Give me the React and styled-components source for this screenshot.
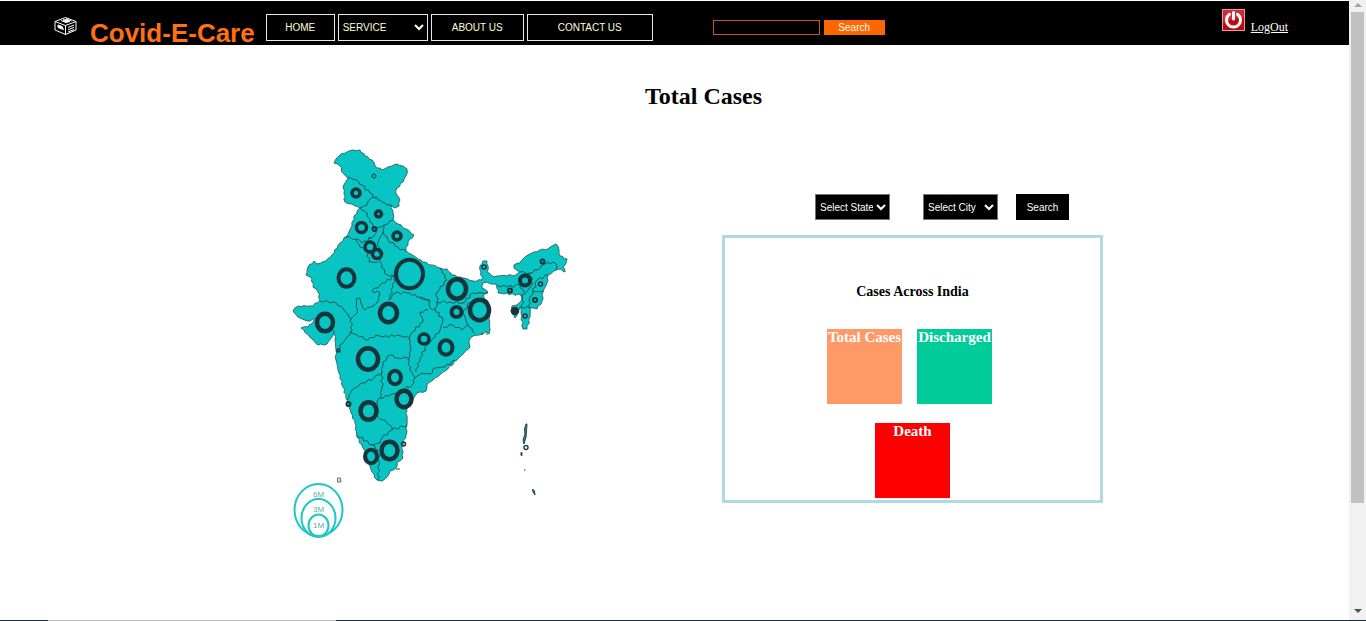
import React from "react";
import styled, { createGlobalStyle } from "styled-components";

const Global = createGlobalStyle`
  * { box-sizing: border-box; }
  body { margin: 0; background: #fff; font-family: "Liberation Serif", "Times New Roman", serif; color: #000; }
  button, select, input { font-family: "Liberation Sans", Arial, sans-serif; font-size: 10px; margin: 0; }
`;

const Shell = styled.div`
  display: flex;
  flex-direction: column;
  min-height: 100vh;
`;
const Page = styled.div`
  display: flex;
  flex: 1;
`;
const BottomEdge = styled.div`
  display: flex;
  height: 1px;
  padding-left: 48px;
  background: #1b2b3c;
  &::before { content: ""; width: 288px; background: #bfbfbf; }
`;
const Content = styled.div`
  flex: 1;
  min-width: 0;
  padding-top: 1px;
`;
const Header = styled.header`
  display: flex;
  align-items: flex-start;
  height: 44px;
  padding: 0 61px 0 54px;
  background: #000;
`;
const LogoBox = styled.svg`
  flex: none;
  width: 23px;
  height: 20px;
  margin: 15px 13px 0 0;
`;
const Brand = styled.h1`
  flex: none;
  margin: 20px 11px 0 0;
  font: bold 26px/24px "Liberation Sans", Arial, sans-serif;
  color: #ff7011;
`;
const Nav = styled.nav`
  display: flex;
  flex: none;
  gap: 3px;
  margin-top: 13px;
`;
const NavButton = styled.button`
  width: ${(p) => p.$width}px;
  height: 27px;
  padding: 0;
  background: #000;
  color: #ffffd8;
  border: 1px solid #e8e8e8;
`;
const NavSelect = styled.select`
  width: 90px;
  height: 27px;
  padding: 0;
  background: #000;
  color: #ffffd8;
  border: 1px solid #e8e8e8;
  border-radius: 0;
`;
const SearchForm = styled.form`
  display: flex;
  flex: none;
  gap: 4px;
  margin: 19px auto 0 60px;
`;
const SearchInput = styled.input`
  width: 107px;
  height: 15px;
  padding: 0 2px;
  background: #000;
  color: #fff;
  border: 1px solid #c8571a;
`;
const SearchButton = styled.button`
  width: 61px;
  height: 15px;
  padding: 0;
  background: #f60;
  color: #fff;
  border: 0;
`;
const LogOut = styled.div`
  display: flex;
  flex: none;
  gap: 6px;
  margin-top: 8px;
  svg { width: 23px; height: 22px; }
  a { margin-top: 11px; font-size: 12px; line-height: 14px; color: #fff; }
`;

const Title = styled.h2`
  margin: 37px 0 0;
  padding-left: 58px;
  text-align: center;
  font-size: 24px;
  line-height: 28px;
`;
const Main = styled.main`
  display: flex;
  flex-wrap: wrap;
  justify-content: center;
  align-items: flex-start;
  gap: 142px;
  padding: 30px 0 40px 34px;
`;
const Map = styled.svg`
  width: 300px;
  height: 410px;
`;
const Stats = styled.section`
  width: 381px;
  margin-top: 54px;
`;
const Filters = styled.form`
  display: flex;
  justify-content: flex-end;
  padding-right: 34px;
  margin-bottom: 15px;
`;
const FilterSelect = styled.select`
  width: 75px;
  height: 26px;
  margin-right: ${(p) => p.$gap}px;
  padding: 0;
  background: #000;
  color: #fff;
  border: 1px solid #767676;
  border-radius: 0;
`;
const FilterButton = styled.button`
  width: 53px;
  height: 26px;
  padding: 0;
  background: #000;
  color: #fff;
  border: 0;
`;
const Panel = styled.div`
  border: 3px solid #b0dade;
  padding: 46px 0 2px;
`;
const PanelTitle = styled.h3`
  margin: 0 0 29px;
  text-align: center;
  font-size: 14px;
  line-height: 16px;
`;
const Cards = styled.div`
  display: flex;
  justify-content: center;
  gap: 15px;
  padding-right: ${(p) => p.$inset || 0}px;
  margin-bottom: ${(p) => p.$below || 0}px;
`;
const Card = styled.div`
  width: 75px;
  height: 75px;
  background: ${(p) => p.$color};
  color: #fff;
  text-align: center;
  white-space: nowrap;
  font-weight: bold;
  font-size: 15px;
  line-height: 17px;
`;

const ScrollTrack = styled.div`
  flex: none;
  display: flex;
  flex-direction: column;
  align-items: center;
  justify-content: space-between;
  width: 17px;
  padding: 3px 0 7px;
  background: #f1f1f1;
`;
const ScrollThumb = styled.div`
  flex: 0 1 491px;
  width: 13px;
  margin: 5px 0 auto;
  background: #c1c1c1;
`;
const Arrow = styled.svg`
  flex: none;
  width: 8px;
  height: 4px;
`;

/* Adds small deterministic wiggles to a polyline so that borders look surveyed. */
function rough(points, closed, amount) {
  const list = closed ? [...points, points[0]] : points;
  let d = `M${list[0][0]} ${list[0][1]}`;
  for (let i = 1; i < list.length; i++) {
    const [x1, y1] = list[i - 1];
    const [x2, y2] = list[i];
    const len = Math.hypot(x2 - x1, y2 - y1) || 1;
    const n = Math.max(1, Math.round(len / 3));
    for (let k = 1; k < n; k++) {
      const t = k / n;
      const r = Math.sin((x1 + y2) * 12.9898 + k * 78.233) * amount;
      const x = x1 + (x2 - x1) * t - ((y2 - y1) / len) * r;
      const y = y1 + (y2 - y1) * t + ((x2 - x1) / len) * r;
      d += `L${x.toFixed(1)} ${y.toFixed(1)}`;
    }
    d += `L${x2} ${y2}`;
  }
  return closed ? d + "Z" : d;
}
const parse = (s) => s.split(" ").map((p) => p.split(",").map(Number));

const OUTLINE = parse(
  "334,163 336,159 340,155 347,152 353,150 360,150 365,156 372,160 375,166 382,170 388,167 392,166 397,164 403,166 407,169 406,176 403,182 397,188 396,194 400,200 399,206 395,208 391,205 393,213 393,220 398,224 406,229 414,235 408,242 406,251 414,256 423,262 432,265 440,268 447,269 452,275 463,278 473,281 482,280 481,272 480,266 483,261 487,261 488,266 487,272 492,276 497,276 516,275 520,272 514,268 514,265 520,263 524,258 528,255 534,252 540,250 548,249 552,246 556,244 559,250 560,256 567,259 566,263 563,267 565,272 561,269 556,270 548,275 547,283 543,292 542,301 537,309 530,308 530,317 527,329 523,329 521,313 520,307 515,318 511,311 512,306 517,305 522,300 521,295 498,293 497,285 492,284 487,282 483,283 482,288 488,292 483,296 488,301 489,313 490,330 489,334 486,331 482,334 473,336 469,341 470,347 464,353 457,360 445,371 433,380 427,384 426,391 417,393 412,400 406,408 407,416 407,425 406,435 402,446 403,458 397,462 396,468 390,471 387,477 382,481 377,480 372,472 368,460 363,448 357,437 355,423 351,413 347,400 343,387 339,373 336,360 336,350 335,340 334,330 332,337 327,344 318,345 310,337 301,328 308,327 316,319 307,321 298,317 293,311 298,306 313,306 320,300 318,292 313,287 312,278 306,275 308,267 314,261 318,264 326,261 332,255 340,243 347,236 352,226 354,216 360,208 352,204 345,202 344,194 343,187 348,178 343,173 340,166"
);
const BORDERS = [
  "348,177 356,180 362,185 370,193 378,200 385,203 392,207",
  "360,208 367,205 370,199 376,198",
  "360,208 367,213 370,222 376,229 374,236 368,238",
  "376,229 384,225 393,220",
  "384,225 383,232 388,240 398,247 406,252",
  "346,237 356,239 362,243 372,238",
  "356,239 360,247 367,250 369,262 378,262",
  "383,232 378,242 380,258 382,268 387,275 395,276",
  "395,276 380,285 372,291 380,293 377,303 371,307 365,310 362,305 360,298 356,299 357,313 351,319",
  "320,301 333,302 343,308 351,319",
  "351,319 352,330 348,336 343,343 337,350",
  "349,332 357,335 368,340 376,335 383,337 397,335 409,338",
  "395,276 393,287 389,300 395,293 407,293 420,297 430,300",
  "428,310 420,312 423,322 412,332 409,338 411,350 408,360",
  "420,298 430,301 430,308 435,309",
  "437,302 435,309 443,320 440,330 435,337 427,345 420,358 416,372",
  "437,302 450,302 463,303 473,293 488,293",
  "440,268 447,280 437,292 437,302",
  "470,302 463,313 468,325 475,333",
  "443,327 453,325 462,330 468,325",
  "382,372 383,362 390,355 398,358 408,358 410,370 415,378 412,385 397,393 380,398 382,387 382,372",
  "415,378 422,373 430,374 435,368 445,367 455,360",
  "347,400 352,390 363,383 374,378 382,372",
  "380,398 377,403 378,417 384,420 390,425 392,430",
  "407,425 392,430 382,438 380,443 372,445 357,435",
  "372,445 378,450 379,465 378,480",
  "520,272 530,273 537,270 545,264 553,262 557,267 556,270",
  "497,285 507,287 520,285 524,293",
  "548,275 537,280 533,292 543,291",
  "533,292 529,300 530,308",
  "521,295 524,302 521,307 530,308",
  "525,276 530,273 533,284 526,292 521,295",
].map(parse);

// x, y, radius, stroke
const RINGS = [
  [374, 176, 2, 1], [356, 193, 4, 3], [378.5, 214, 3, 3], [361.5, 227.5, 5, 3], [374.5, 229, 2, 2],
  [397, 236, 4, 3], [370, 247, 5, 3], [377, 254, 4.5, 3], [346.5, 278, 8, 3.5], [409.5, 274, 13.5, 3.5],
  [325, 322.5, 8, 4], [388.5, 313, 8.5, 4], [338.5, 350.5, 1.5, 1.5], [368, 359, 10, 4], [424, 339, 5, 3],
  [457, 289, 9, 4], [456.5, 312, 5, 3.5], [479.5, 310, 9.5, 4], [446, 347.5, 6.5, 3.5], [484, 267, 2, 1.5],
  [542.5, 261.5, 2, 2], [525, 280.5, 5, 3.5], [540.5, 284, 2, 1.5], [510, 290.5, 2, 2], [535, 300, 2, 2],
  [515, 311, 2, 4], [525, 316, 2, 1.5], [395, 377.5, 6, 3.5], [404, 399, 7.5, 4], [368.5, 411, 8, 4],
  [348.5, 404, 2, 2], [371, 456.5, 6, 3.5], [389.5, 450.5, 8, 4], [403.5, 444, 2, 1.5],
];

const LEGEND = [
  { label: "6M", cy: 510, rx: 24, ry: 26, ty: 497 },
  { label: "3M", cy: 518, rx: 17, ry: 19, ty: 512 },
  { label: "1M", cy: 525.5, rx: 10, ry: 11, ty: 528 },
];

function IndiaMap() {
  return (
    <Map viewBox="280 140 300 410" role="img" aria-label="Map of cases in India">
      <path d={rough(OUTLINE, true, 0.8)} fill="#08c5c4" stroke="#2b6e70" strokeWidth="1" />
      <g fill="none" stroke="#12595d" strokeWidth="1">
        {BORDERS.map((b, i) => <path key={i} d={rough(b, false, 1.2)} />)}
      </g>
      <g fill="none" stroke="#17343a">
        {RINGS.map(([x, y, r, w], i) => (
          <ellipse key={i} cx={x} cy={y} rx={r} ry={r > 5 ? r + 0.7 : r} strokeWidth={w > 2 ? w + 0.5 : w} />
        ))}
      </g>
      <g fill="#2c8286" stroke="#24474b" strokeWidth="1">
        <path d="M526 424L524.5 429L525 434L523 440L524 444L526 437L526.5 431L527 424Z" />
        <circle cx="526" cy="447.5" r="2" fill="#fff" strokeWidth="1.5" />
        <path d="M521 452.5l1 0l0 3l-1 0z" />
        <path d="M524 470h1.5" />
        <path d="M532.5 489l2 2l0.5 4l-2-3z" />
        <path d="M396 469h4M482 333v2M487 332v3" />
        <path d="M337.5 478l3 0l0.5 4l-3.5 0z" fill="none" stroke="#666" />
        <circle cx="339.5" cy="480" r="0.5" stroke="none" />
      </g>
      {LEGEND.map((l) => (
        <g key={l.label}>
          <ellipse cx="318.5" cy={l.cy} rx={l.rx} ry={l.ry} fill="none" stroke="#1cc6c3" strokeWidth="2" />
          <text x="318.5" y={l.ty} textAnchor="middle" fontSize="8" fontFamily="Liberation Sans, Arial, sans-serif" fill="#5aaeac">
            {l.label}
          </text>
        </g>
      ))}
    </Map>
  );
}

function Logo() {
  return (
    <LogoBox viewBox="0 0 23 20" fill="none" stroke="#fff" strokeWidth="1" strokeLinejoin="round" aria-hidden="true">
      <path d="M11.5 1.5L22 5.5V14L11.5 18.5L1 14V5.5Z" />
      <path d="M1 5.5L11.5 9.5L22 5.5M11.5 9.5V18.5" />
      <path d="M7 4.5L12 6.5M12 2.8L17.5 5" />
      <path d="M9 4L13.5 3.5L16 5.5L12 6.5Z" fill="#fff" />
      <path d="M14 11.5L20 9M14 13.8L20 11.3M14 16L20 13.5" />
      <path d="M4 9L8 10.5L9.5 13.5L4 11.5Z" fill="#fff" />
    </LogoBox>
  );
}

function PowerIcon() {
  return (
    <svg viewBox="0 0 23 22" aria-hidden="true">
      <rect x="0.5" y="0.5" width="22" height="21" fill="#c00a10" stroke="#e59a9a" />
      <path d="M1 1H22V8Q12 9 1 14Z" fill="#cf2c34" />
      <path d="M7.5 5.3A7 7 0 1 0 15.5 5.3" fill="none" stroke="#fff" strokeWidth="3" strokeLinecap="round" />
      <path d="M11.5 3.5V10" stroke="#fff" strokeWidth="3" strokeLinecap="round" />
    </svg>
  );
}

export default function App() {
  const stop = (e) => e.preventDefault();
  return (
    <Shell>
      <Global />
      <Page>
        <Content>
          <Header>
            <Logo />
            <Brand>Covid-E-Care</Brand>
            <Nav>
              <NavButton $width={69}>HOME</NavButton>
              <NavSelect aria-label="Service"><option>SERVICE</option></NavSelect>
              <NavButton $width={93}>ABOUT US</NavButton>
              <NavButton $width={126}>CONTACT US</NavButton>
            </Nav>
            <SearchForm onSubmit={stop}>
              <SearchInput type="text" aria-label="Search the site" />
              <SearchButton>Search</SearchButton>
            </SearchForm>
            <LogOut>
              <PowerIcon />
              <a href="#logout">LogOut</a>
            </LogOut>
          </Header>
          <Title>Total Cases</Title>
          <Main>
            <IndiaMap />
            <Stats>
              <Filters onSubmit={stop}>
                <FilterSelect $gap={33} aria-label="State"><option>Select State</option></FilterSelect>
                <FilterSelect $gap={18} aria-label="City"><option>Select City</option></FilterSelect>
                <FilterButton>Search</FilterButton>
              </Filters>
              <Panel>
                <PanelTitle>Cases Across India</PanelTitle>
                <Cards $inset={6} $below={19}>
                  <Card $color="#ff9966">Total Cases</Card>
                  <Card $color="#00cc99">Discharged</Card>
                </Cards>
                <Cards>
                  <Card $color="#ff0000">Death</Card>
                </Cards>
              </Panel>
            </Stats>
          </Main>
        </Content>
        <ScrollTrack aria-hidden="true">
          <Arrow viewBox="0 0 8 4"><path d="M0 4L4 0L8 4Z" fill="#a3a3a3" /></Arrow>
          <ScrollThumb />
          <Arrow viewBox="0 0 8 4"><path d="M0 0H8L4 4Z" fill="#505050" /></Arrow>
        </ScrollTrack>
      </Page>
      <BottomEdge />
    </Shell>
  );
}
